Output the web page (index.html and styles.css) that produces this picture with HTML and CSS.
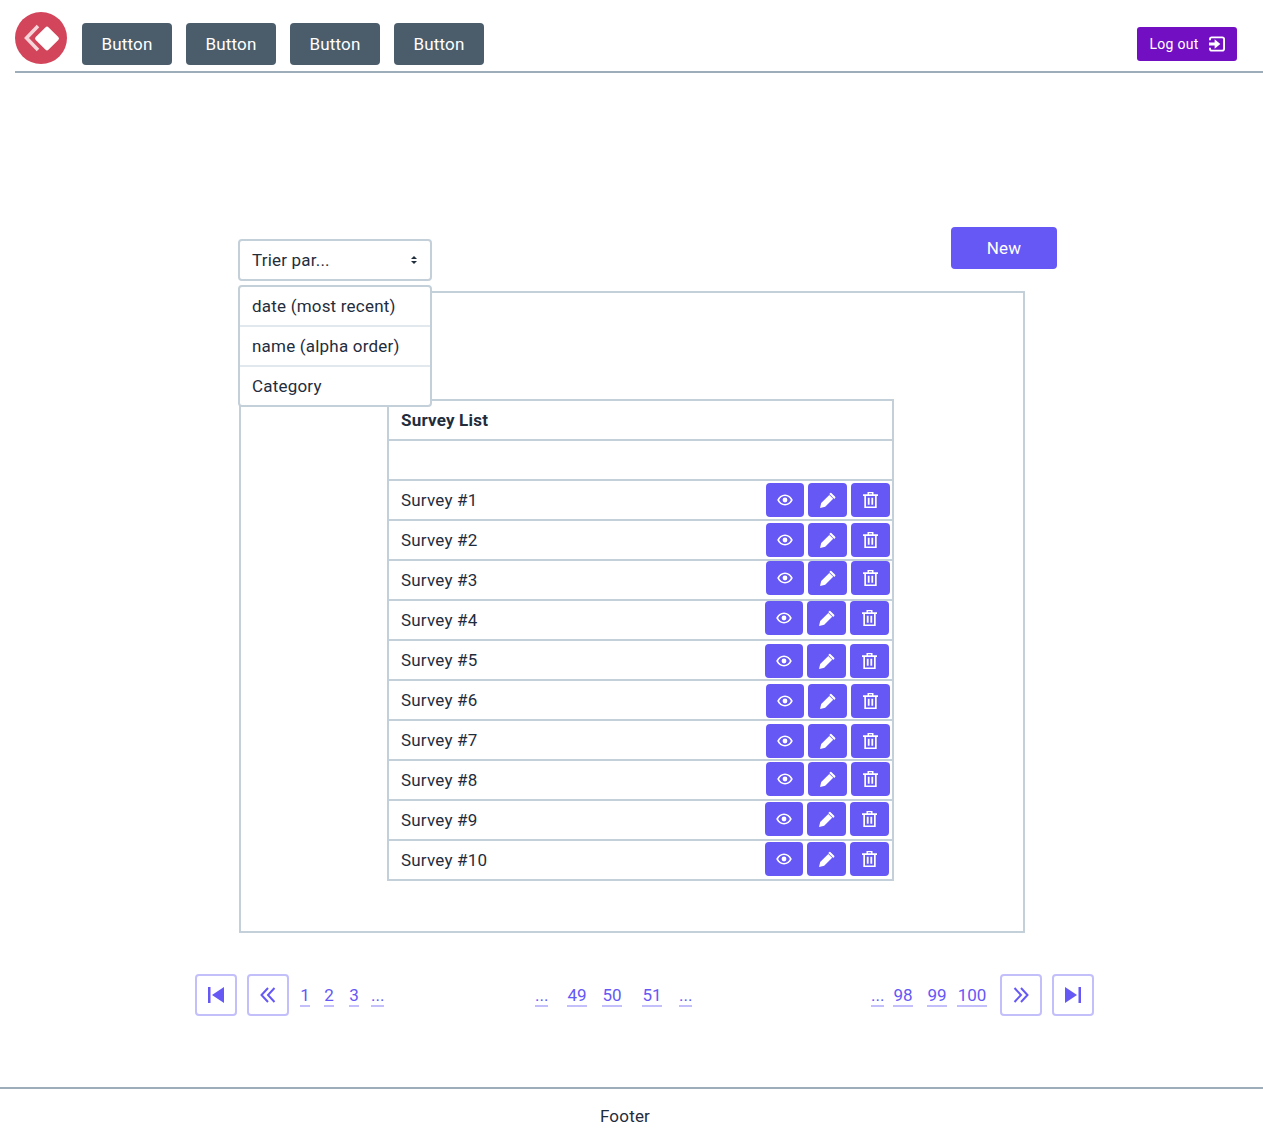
FILE: index.html
```html
<!DOCTYPE html>
<html lang="en">
<head>
<meta charset="utf-8">
<title>Survey List</title>
<link rel="stylesheet" href="styles.css">
</head>
<body>
<svg class="defs" width="0" height="0" aria-hidden="true">
  <symbol id="eye" viewBox="0 0 16 12"><path fill-rule="evenodd" d="M8 .5C4.6.5 1.7 2.6.2 6c1.500 3.400 4.400 5.500 7.800 5.500s6.300-2.100 7.800-5.500C14.300 2.600 11.400.5 8 .5zm0 9.400C5.500 9.900 3.400 8.500 2.100 6 3.400 3.500 5.500 2.100 8 2.100s4.600 1.400 5.900 3.900C12.600 8.500 10.500 9.900 8 9.900z"/><circle cx="8" cy="6" r="2.400"/></symbol>
  <symbol id="pencil" viewBox="0 0 16 16"><path d="M11.300.9l3.900 3.900a.8.8 0 0 1 0 1.100l-.9 1-5-5 1-1a.8.8 0 0 1 1 0zM9.300 2.900l3.900 3.900-8 8L0 16l1.200-5.100z"/></symbol>
  <symbol id="trash" viewBox="0 0 15 16"><path fill-rule="evenodd" d="M4.500 0h6v2.300H15v1.700h-1.300v12H1.300V4H0V2.300h4.500zm1.500 1.300v1h3v-1zM3 4v10.400h9V4z"/><path d="M4.800 5.700h1.800v7H4.800zM8.400 5.700h1.800v7H8.400z"/></symbol>
</svg>

<header class="header">
  <div class="logo">
    <svg width="52" height="52" viewBox="0 0 52 52"><path class="logo-back" d="M23 14 L11.500 26 L23 38"/><rect class="logo-front" x="23" y="17.500" width="18" height="18" rx="2" transform="rotate(45 32 26.500)"/></svg>
  </div>
  <a class="nav-btn">Button</a>
  <a class="nav-btn">Button</a>
  <a class="nav-btn">Button</a>
  <a class="nav-btn">Button</a>
  <a class="logout">Log out
    <svg width="16" height="16" viewBox="0 0 17 16"><path class="logout-frame" d="M1 4V3a2 2 0 0 1 2-2h11a2 2 0 0 1 2 2v10a2 2 0 0 1-2 2H3a2 2 0 0 1-2-2v-1"/><path class="logout-arrow" d="M0 6.300h6V3l6 5-6 5V9.700H0z"/></svg>
  </a>
</header>

<main class="page">
  <div class="toolbar">
    <div class="select-wrap">
      <div class="select">
        <span>Trier par...</span>
        <span class="arrows"><i class="arrow-up"></i><i class="arrow-down"></i></span>
      </div>
      <ul class="dropdown">
        <li>date (most recent)</li>
        <li>name (alpha order)</li>
        <li>Category</li>
      </ul>
    </div>
    <a class="new-btn">New</a>
  </div>

  <section class="box">
    <div class="table">
      <div class="row head">Survey List</div>
      <div class="row"></div>
      <div class="row"><span>Survey #1</span><div class="actions at2"><a class="act a1"><svg class="i-eye"><use href="#eye"/></svg></a><a class="act a2"><svg class="i-pen"><use href="#pencil"/></svg></a><a class="act a2"><svg class="i-tr"><use href="#trash"/></svg></a></div></div>
      <div class="row"><span>Survey #2</span><div class="actions at2"><a class="act a1"><svg class="i-eye"><use href="#eye"/></svg></a><a class="act a2"><svg class="i-pen"><use href="#pencil"/></svg></a><a class="act a2"><svg class="i-tr"><use href="#trash"/></svg></a></div></div>
      <div class="row"><span>Survey #3</span><div class="actions at0"><a class="act a1"><svg class="i-eye"><use href="#eye"/></svg></a><a class="act a2"><svg class="i-pen"><use href="#pencil"/></svg></a><a class="act a2"><svg class="i-tr"><use href="#trash"/></svg></a></div></div>
      <div class="row"><span>Survey #4</span><div class="actions at0 shift"><a class="act a1"><svg class="i-eye"><use href="#eye"/></svg></a><a class="act a2"><svg class="i-pen"><use href="#pencil"/></svg></a><a class="act a2"><svg class="i-tr"><use href="#trash"/></svg></a></div></div>
      <div class="row"><span>Survey #5</span><div class="actions at3 shift"><a class="act a1"><svg class="i-eye"><use href="#eye"/></svg></a><a class="act a2"><svg class="i-pen"><use href="#pencil"/></svg></a><a class="act a2"><svg class="i-tr"><use href="#trash"/></svg></a></div></div>
      <div class="row"><span>Survey #6</span><div class="actions at3"><a class="act a1"><svg class="i-eye"><use href="#eye"/></svg></a><a class="act a2"><svg class="i-pen"><use href="#pencil"/></svg></a><a class="act a2"><svg class="i-tr"><use href="#trash"/></svg></a></div></div>
      <div class="row"><span>Survey #7</span><div class="actions at3"><a class="act a1"><svg class="i-eye"><use href="#eye"/></svg></a><a class="act a2"><svg class="i-pen"><use href="#pencil"/></svg></a><a class="act a2"><svg class="i-tr"><use href="#trash"/></svg></a></div></div>
      <div class="row"><span>Survey #8</span><div class="actions at1"><a class="act a1"><svg class="i-eye"><use href="#eye"/></svg></a><a class="act a2"><svg class="i-pen"><use href="#pencil"/></svg></a><a class="act a2"><svg class="i-tr"><use href="#trash"/></svg></a></div></div>
      <div class="row"><span>Survey #9</span><div class="actions at1 shift"><a class="act a1"><svg class="i-eye"><use href="#eye"/></svg></a><a class="act a2"><svg class="i-pen"><use href="#pencil"/></svg></a><a class="act a2"><svg class="i-tr"><use href="#trash"/></svg></a></div></div>
      <div class="row"><span>Survey #10</span><div class="actions at1 shift"><a class="act a1"><svg class="i-eye"><use href="#eye"/></svg></a><a class="act a2"><svg class="i-pen"><use href="#pencil"/></svg></a><a class="act a2"><svg class="i-tr"><use href="#trash"/></svg></a></div></div>
    </div>
  </section>

  <nav class="pager">
    <a class="pg-btn"><svg width="18" height="16" viewBox="0 0 18 16"><path class="fill" d="M1 0h2.500v16H1zM17 0v16L5 8z"/></svg></a>
    <a class="pg-btn m10"><svg width="16" height="16" viewBox="0 0 16 16"><path class="line" d="M8 1 1.500 8 8 15M14.500 1 8 8l6.500 7"/></svg></a>
    <a class="num n1">1</a>
    <a class="num n2">2</a>
    <a class="num n3">3</a>
    <a class="num n4">...</a>
    <a class="num n5">...</a>
    <a class="num n6">49</a>
    <a class="num n7">50</a>
    <a class="num n8">51</a>
    <a class="num n9">...</a>
    <a class="num n10">...</a>
    <a class="num n11">98</a>
    <a class="num n12">99</a>
    <a class="num n13">100</a>
    <a class="pg-btn n14"><svg width="16" height="16" viewBox="0 0 16 16"><path class="line" d="M1.500 1 8 8l-6.500 7M8 1l6.500 7L8 15"/></svg></a>
    <a class="pg-btn m10"><svg width="18" height="16" viewBox="0 0 18 16"><path class="fill" d="M14.500 0H17v16h-2.500zM1 0v16l12-8z"/></svg></a>
  </nav>
</main>

<footer class="footer">Footer</footer>
</body>
</html>
```

FILE: styles.css
```css
* { box-sizing: border-box; }
body {
  margin: 0;
  font-family: Roboto, "Liberation Sans", sans-serif;
  font-size: 17px;
  letter-spacing: 0.2px;
  color: #1f2d3d;
  background: #fff;
}
.defs { position: absolute; }
a { display: block; }

.header {
  display: flex;
  align-items: flex-start;
  height: 73px;
  margin-left: 15px;
  padding-top: 12px;
  border-bottom: 2px solid #9eadba;
}
.logo {
  width: 52px;
  height: 52px;
  border-radius: 50%;
  background: #d3455b;
  margin-right: 15px;
}
.logo svg { display: block; }
.logo-back { fill: none; stroke: #f6d5da; stroke-width: 3.500; }
.logo-front { fill: #fff; }
.nav-btn {
  width: 90px;
  height: 42px;
  margin: 11px 14px 0 0;
  border-radius: 4px;
  background: #4b5c6b;
  color: #fff;
  text-align: center;
  line-height: 42px;
}
.logout {
  display: flex;
  align-items: center;
  justify-content: center;
  gap: 10px;
  width: 100px;
  height: 34px;
  margin: 15px 26px 0 auto;
  border-radius: 3px;
  background: #730fc3;
  color: #fff;
  font-size: 14px;
  letter-spacing: 0.3px;
}
.logout-frame { fill: none; stroke: #fff; stroke-width: 2; }
.logout-arrow { fill: #fff; }

.page { padding: 154px 0 0 0; }
.toolbar {
  display: flex;
  justify-content: space-between;
  align-items: flex-start;
  width: 819px;
  height: 54px;
  margin-left: 238px;
}
.select-wrap { position: relative; margin-top: 12px; width: 194px; }
.select {
  display: flex;
  justify-content: space-between;
  align-items: center;
  height: 42px;
  padding: 0 13px 0 12px;
  border: 2px solid #c3cfd9;
  border-radius: 4px;
  background: #fff;
}
.arrows { display: flex; flex-direction: column; gap: 2px; }
.arrow-up, .arrow-down { display: block; width: 0; height: 0; border-left: 3px solid transparent; border-right: 3px solid transparent; }
.arrow-up { border-bottom: 3px solid #1f2d3d; }
.arrow-down { border-top: 3px solid #1f2d3d; }
.dropdown {
  position: absolute;
  top: 46px;
  left: 0;
  z-index: 2;
  width: 194px;
  margin: 0;
  padding: 0;
  list-style: none;
  background: #fff;
  border: 2px solid #c3cfd9;
  border-radius: 4px;
}
.dropdown li {
  height: 40px;
  padding: 0 12px;
  line-height: 38px;
  border-bottom: 2px solid #e1e8ee;
}
.dropdown li:last-child { height: 38px; border-bottom: 0; }
.new-btn {
  width: 106px;
  height: 42px;
  border-radius: 4px;
  background: #6558f5;
  color: #fff;
  text-align: center;
  line-height: 42px;
}

.box {
  width: 786px;
  height: 642px;
  margin: 10px 0 0 239px;
  padding: 106px 0 0 146px;
  border: 2px solid #c3cfd9;
}
.table {
  width: 507px;
  border: solid #c3cfd9;
  border-width: 0 2px 2px;
}
.row {
  display: flex;
  justify-content: space-between;
  align-items: flex-start;
  height: 40px;
  padding-left: 12px;
  border-top: 2px solid #c3cfd9;
  line-height: 38px;
}
.head { font-weight: 700; }
.actions { display: flex; margin-right: 2px; }
.shift { margin-right: 3px; }
.at0 { margin-top: 0; }
.at1 { margin-top: 1px; }
.at2 { margin-top: 2px; }
.at3 { margin-top: 3px; }
.act {
  display: flex;
  align-items: center;
  justify-content: center;
  height: 34px;
  border-radius: 4px;
  background: #6558f5;
  fill: #fff;
  margin-left: 4px;
}
.a1 { width: 38px; }
.a2 { width: 39px; }
.i-eye { width: 16px; height: 12px; }
.i-pen { width: 16px; height: 16px; }
.i-tr { width: 15px; height: 16px; }

.pager {
  display: flex;
  align-items: flex-start;
  margin: 41px 0 0 195px;
  height: 42px;
  color: #6558f5;
}
.pg-btn {
  display: flex;
  align-items: center;
  justify-content: center;
  width: 42px;
  height: 42px;
  border: 2px solid #c3bffb;
  border-radius: 4px;
}
.m10 { margin-left: 10px; }
.fill { fill: #6558f5; }
.line { fill: none; stroke: #6558f5; stroke-width: 2; }
.num {
  height: 33px;
  color: #6558f5;
  line-height: 42px;
  text-align: center;
  border-bottom: 2px solid #c3bffb;
  width: 10px;
  letter-spacing: 0;
}
.n1 { margin-left: 11px; }
.n2 { margin-left: 14px; }
.n3 { margin-left: 15px; }
.n4 { margin-left: 12px; width: 13px; }
.n5 { margin-left: 151px; width: 13px; }
.n6 { margin-left: 19px; width: 20px; }
.n7 { margin-left: 15px; width: 20px; }
.n8 { margin-left: 20px; width: 20px; }
.n9 { margin-left: 17px; width: 13px; }
.n10 { margin-left: 179px; width: 13px; }
.n11 { margin-left: 9px; width: 20px; }
.n12 { margin-left: 14px; width: 20px; }
.n13 { margin-left: 10px; width: 30px; }
.n14 { margin-left: 13px; }

.footer {
  margin-top: 71px;
  height: 53px;
  padding: 17px 13px 0 0;
  border-top: 2px solid #9eadba;
  text-align: center;
}
```
